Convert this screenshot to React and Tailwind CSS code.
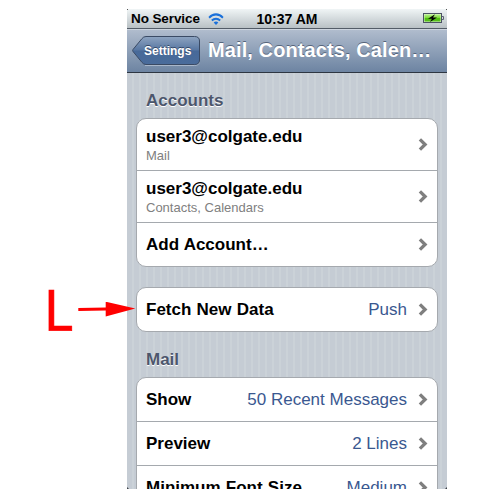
import React from 'react';

const accounts = [
  { title: 'user3@colgate.edu', subtitle: 'Mail' },
  { title: 'user3@colgate.edu', subtitle: 'Contacts, Calendars' },
  { title: 'Add Account…' },
];

const fetchRows = [{ title: 'Fetch New Data', value: 'Push' }];

const mailRows = [
  { title: 'Show', value: '50 Recent Messages' },
  { title: 'Preview', value: '2 Lines' },
  { title: 'Minimum Font Size', value: 'Medium' },
];

const Chevron = () => (
  <svg width="10" height="14" viewBox="0 0 10 14" className="shrink-0">
    <path d="M1.9 1.4L7.1 6.5L1.9 11.6" fill="none" stroke="#7f7f7f" strokeWidth="3.3" />
  </svg>
);

const WifiIcon = () => (
  <svg width="16" height="12" viewBox="0 0 18 12" preserveAspectRatio="none">
    <g fill="none" stroke="#1a70da" strokeWidth="2.1">
      <path d="M1.2 4.7C5.7 0.3 12.3 0.3 16.8 4.7" />
      <path d="M4.3 7.6C7 5.1 11 5.1 13.7 7.6" />
    </g>
    <path d="M6.4 9.5C8 8.2 10 8.2 11.6 9.5L9 12Z" fill="#1a70da" />
  </svg>
);

const BatteryIcon = () => (
  <svg width="21" height="12" viewBox="0 0 21 12">
    <defs>
      <linearGradient id="charge" x1="0" y1="0" x2="0" y2="1">
        <stop offset="0" stopColor="#b6ef8c" />
        <stop offset="0.45" stopColor="#7fdc3c" />
        <stop offset="0.5" stopColor="#4fc010" />
        <stop offset="1" stopColor="#55bd1c" />
      </linearGradient>
    </defs>
    <rect x="0.5" y="0.5" width="18" height="9" fill="#d9f5c4" stroke="#4b5263" />
    <rect x="1.5" y="1.5" width="16" height="7" fill="url(#charge)" />
    <path d="M19 3.5H20.5V6.5H19" fill="#d5dade" stroke="#5b6272" />
    <path d="M12 1.2L5 5.7H9L7 9L14 4.5H10Z" fill="#000" />
  </svg>
);

const StatusBar = () => (
  <div className="h-5 shrink-0 grid grid-cols-[1fr_auto_1fr] items-center border-b border-[#535c67] bg-linear-to-b from-[#f0f5f6] to-[#b9c1c5] pl-1 pr-[3px] text-[13.5px] font-bold leading-none text-black">
    <div className="flex items-center">
      <span className="tracking-[-0.1px]">No Service</span>
      <span className="ml-[8px]"><WifiIcon /></span>
    </div>
    <span className="mr-[1px] text-[14px] leading-none">10:37 AM</span>
    <div className="flex justify-end"><BatteryIcon /></div>
  </div>
);

const NavBar = () => (
  <div className="h-11 shrink-0 flex items-center border-t border-b border-t-[#cdd5df] border-b-[#2d3642] bg-linear-to-b from-[#b0bccd] to-[#6d84a2] pl-[5px]">
    <button className="relative w-[68px] h-[30px] shrink-0">
      <svg width="68" height="30" viewBox="0 0 68 30" className="block">
        <defs>
          <linearGradient id="back" x1="0" y1="0" x2="0" y2="1">
            <stop offset="0" stopColor="#8ea4c1" />
            <stop offset="0.48" stopColor="#5877a2" />
            <stop offset="0.52" stopColor="#476999" />
            <stop offset="1" stopColor="#4a6c9b" />
          </linearGradient>
        </defs>
        <path d="M13 29.5H62.5Q67.5 29.5 67.5 25" fill="none" stroke="#a9b7ca" />
        <path d="M14 0.5H62.5Q67.5 0.5 67.5 5V24Q67.5 28.5 62.5 28.5H14Q11.5 28.5 9.8 26.2L1 15.5Q0.3 14.5 1 13.5L9.8 2.8Q11.5 0.5 14 0.5Z" fill="url(#back)" stroke="#3a4a64" />
      </svg>
      <span className="absolute inset-0 pl-3 pr-1 flex items-center text-[12px] font-bold text-white [text-shadow:0_-1px_0_#334867]">Settings</span>
    </button>
    <h1 className="ml-2 mb-[2px] whitespace-nowrap text-[20px] leading-none tracking-[0.1px] font-bold text-white [text-shadow:0_-1px_0_#56657b]">
      Mail, Contacts, Calen…
    </h1>
  </div>
);

const Row = ({ title, subtitle, value }) => (
  <div className={`flex items-center pl-[9px] pr-[9px] ${subtitle ? 'h-[52px]' : 'h-11 last:h-[43px]'}`}>
    <div className={`flex-1 whitespace-nowrap ${subtitle ? 'pt-[2px]' : ''}`}>
      <div className="text-[17px] leading-[20px] font-bold text-black [word-spacing:0.5px]">{title}</div>
      {subtitle && <div className="text-[13px] leading-[17px] text-[#808080]">{subtitle}</div>}
    </div>
    {value && <span className="mr-[11px] whitespace-nowrap text-[17px] leading-[20px] text-[#3a5890]">{value}</span>}
    <Chevron />
  </div>
);

const Group = ({ rows }) => (
  <div className="mx-[9px] shrink-0 rounded-[10px] border border-[#a5a9ae] bg-white divide-y divide-[#a5a9ae]">
    {rows.map((row, i) => (
      <Row key={i} {...row} />
    ))}
  </div>
);

const Heading = ({ children }) => (
  <h2 className="pt-[18px] pb-[7px] pl-[19px] text-[17px] leading-[20px] font-bold text-[#4c566c] [text-shadow:0_1px_0_#fff]">{children}</h2>
);

const App = () => {
  return (
    <div className="w-[504px] h-[504px] overflow-hidden bg-white flex items-start pt-[9px] font-['Liberation_Sans',Arial,sans-serif]">
      {/* Callout pointing at the Fetch New Data row */}
      <div className="relative z-10 w-[127px] shrink-0 flex items-start pl-[44px] pt-[265px]">
        <span className="w-[34px] shrink-0 pt-[2px] text-[56px] leading-[70px] text-[#ff0000] [-webkit-text-stroke:0.6px_#ff0000] font-['DejaVu_Sans_Condensed','DejaVu_Sans',sans-serif]">L</span>
        <svg width="58" height="16" viewBox="0 0 58 16" className="mt-[28px] shrink-0">
          <path d="M0.3 6L27.7 5.4V-0.3L57.3 6.5L27.7 14.4V8.4L0.3 9Z" fill="#ff0000" />
        </svg>
      </div>

      <div className="relative w-80 h-[480px] shrink-0 overflow-hidden flex flex-col">
        <StatusBar />
        <NavBar />
        <div className="flex-1 min-h-0 flex flex-col bg-[repeating-linear-gradient(90deg,#c5ccd4_0px,#c5ccd4_5px,#cbd2d8_5px,#cbd2d8_7px)]">
          <Heading>Accounts</Heading>
          <Group rows={accounts} />
          <div className="h-5 shrink-0" />
          <Group rows={fetchRows} />
          <Heading>Mail</Heading>
          <Group rows={mailRows} />
        </div>

        {/* Dark screen corners */}
        <span className="absolute left-0 top-0 size-px bg-[#555]" />
        <span className="absolute right-0 top-0 size-px bg-[#555]" />
        <span className="absolute left-0 bottom-0 size-[2px] bg-[#3c4046] [clip-path:polygon(0_0,100%_100%,0_100%)]" />
        <span className="absolute right-0 bottom-0 size-[2px] bg-[#3c4046] [clip-path:polygon(100%_0,100%_100%,0_100%)]" />
      </div>
    </div>
  );
};

export default App;
